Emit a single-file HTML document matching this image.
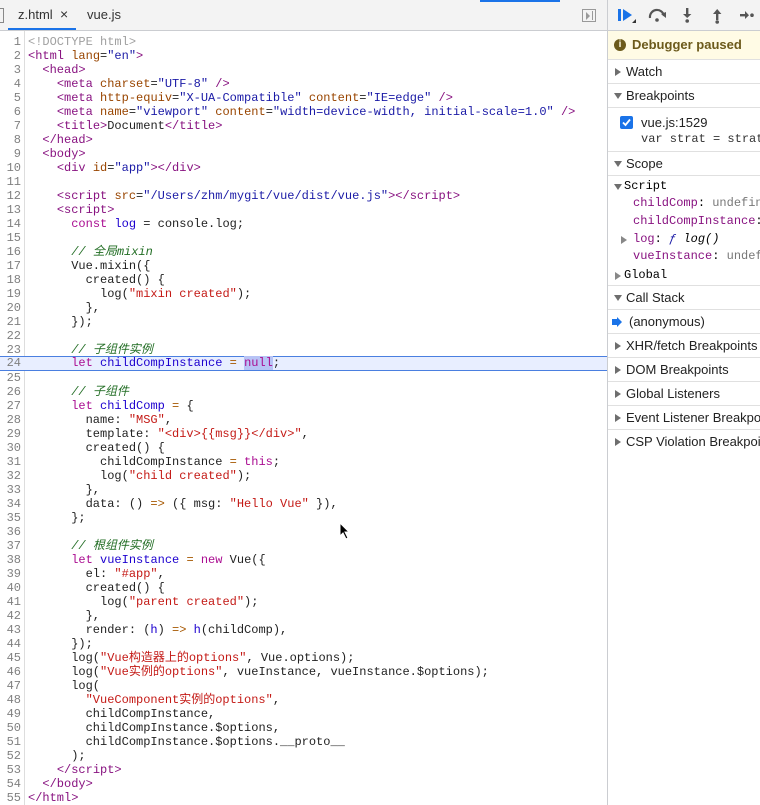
<!DOCTYPE html>
<html><head><meta charset="utf-8">
<style>
*{margin:0;padding:0;box-sizing:border-box}
body{width:760px;height:805px;overflow:hidden;background:#fff;font-family:"Liberation Sans","Noto Sans CJK SC",sans-serif;position:relative}
#tabs{position:absolute;left:0;top:0;width:607px;height:31px;background:#f3f3f3;border-bottom:1px solid #cbcdd1}
#tabs .t{position:absolute;top:7px;font-size:13px;color:#333}
#code{position:absolute;left:0;top:35px;width:607px}
.l{height:14px;line-height:14px;font-family:"Liberation Mono","Noto Sans CJK SC",monospace;font-size:12px;white-space:pre;position:relative;color:#222}
.l .n{display:inline-block;width:21px;text-align:right;color:#808080;padding-right:0}
.l .c{position:absolute;left:28px;top:0}
#gut{position:absolute;left:24px;top:31px;width:1px;height:774px;background:#ddd}
.hl{background:#e8eeff;border-top:1px solid #4a7fe0;border-bottom:1px solid #4a7fe0;height:15px;margin-top:-1px;line-height:13px}
.tg{color:#881280}.at{color:#994500}.av{color:#1a1aa6}.dt{color:#a0a0a0}
.kw{color:#aa0d91}.df{color:#1c00cf}.s{color:#c41a16}.cm{color:#236e25;font-style:italic}.op{color:#a65700}
#side{position:absolute;left:607px;top:0;width:153px;height:805px;border-left:1px solid #cbcdd1;background:#fff;overflow:hidden}
#tb{height:31px;border-bottom:1px solid #cbcdd1;background:#f3f3f3;position:relative}
#paused{height:29px;background:#fffbe5;border-bottom:1px solid #e0e0e0;font-size:13px;font-weight:bold;color:#6c5a1b;line-height:28px;padding-left:24px;position:relative}
.sec{height:24px;border-bottom:1px solid #e0e0e0;font-size:13px;color:#222;line-height:23px;padding-left:18px;position:relative;white-space:nowrap}
.tri{position:absolute;left:6px;top:9px;width:0;height:0;border-left:4px solid transparent;border-right:4px solid transparent;border-top:6px solid #6e6e6e}
.tr{position:absolute;left:7px;top:8px;width:0;height:0;border-top:4px solid transparent;border-bottom:4px solid transparent;border-left:6px solid #6e6e6e}
.mono{font-family:"Liberation Mono",monospace;font-size:12px;white-space:pre;position:absolute}
</style></head><body>
<div id="tabs">
<div style="position:absolute;left:0;top:8px;width:4px;height:15px;border:1px solid #888;border-left:none"></div>
<span class="t" style="left:18px">z.html</span><span class="t" style="left:60px;font-size:14px;top:6px">×</span>
<span class="t" style="left:87px">vue.js</span>
<div style="position:absolute;left:8px;top:28px;width:68px;height:2px;background:#1a73e8"></div>
<div style="position:absolute;left:582px;top:9px;width:14px;height:13px;border:1px solid #999"><div style="position:absolute;right:2px;top:1px;width:1px;height:9px;background:#999"></div><div style="position:absolute;left:3px;top:2px;border-top:4px solid transparent;border-bottom:4px solid transparent;border-left:4px solid #999"></div></div>
</div>
<div style="position:absolute;left:480px;top:0;width:80px;height:2px;background:#1a73e8"></div>
<div id="gut"></div>
<div id="code">
<div class="l"><span class="n">1</span><span class="c dt">&lt;!DOCTYPE html&gt;</span></div>
<div class="l"><span class="n">2</span><span class="c"><span class="tg">&lt;html</span> <span class="at">lang</span>=<span class="av">"en"</span><span class="tg">&gt;</span></span></div>
<div class="l"><span class="n">3</span><span class="c">  <span class="tg">&lt;head&gt;</span></span></div>
<div class="l"><span class="n">4</span><span class="c">    <span class="tg">&lt;meta</span> <span class="at">charset</span>=<span class="av">"UTF-8"</span> <span class="tg">/&gt;</span></span></div>
<div class="l"><span class="n">5</span><span class="c">    <span class="tg">&lt;meta</span> <span class="at">http-equiv</span>=<span class="av">"X-UA-Compatible"</span> <span class="at">content</span>=<span class="av">"IE=edge"</span> <span class="tg">/&gt;</span></span></div>
<div class="l"><span class="n">6</span><span class="c">    <span class="tg">&lt;meta</span> <span class="at">name</span>=<span class="av">"viewport"</span> <span class="at">content</span>=<span class="av">"width=device-width, initial-scale=1.0"</span> <span class="tg">/&gt;</span></span></div>
<div class="l"><span class="n">7</span><span class="c">    <span class="tg">&lt;title&gt;</span>Document<span class="tg">&lt;/title&gt;</span></span></div>
<div class="l"><span class="n">8</span><span class="c">  <span class="tg">&lt;/head&gt;</span></span></div>
<div class="l"><span class="n">9</span><span class="c">  <span class="tg">&lt;body&gt;</span></span></div>
<div class="l"><span class="n">10</span><span class="c">    <span class="tg">&lt;div</span> <span class="at">id</span>=<span class="av">"app"</span><span class="tg">&gt;&lt;/div&gt;</span></span></div>
<div class="l"><span class="n">11</span></div>
<div class="l"><span class="n">12</span><span class="c">    <span class="tg">&lt;script</span> <span class="at">src</span>=<span class="av">"/Users/zhm/mygit/vue/dist/vue.js"</span><span class="tg">&gt;&lt;/script&gt;</span></span></div>
<div class="l"><span class="n">13</span><span class="c">    <span class="tg">&lt;script&gt;</span></span></div>
<div class="l"><span class="n">14</span><span class="c">      <span class="kw">const</span> <span class="df">log</span> = console.log;</span></div>
<div class="l"><span class="n">15</span></div>
<div class="l"><span class="n">16</span><span class="c">      <span class="cm">// 全局mixin</span></span></div>
<div class="l"><span class="n">17</span><span class="c">      Vue.mixin({</span></div>
<div class="l"><span class="n">18</span><span class="c">        created() {</span></div>
<div class="l"><span class="n">19</span><span class="c">          log(<span class="s">"mixin created"</span>);</span></div>
<div class="l"><span class="n">20</span><span class="c">        },</span></div>
<div class="l"><span class="n">21</span><span class="c">      });</span></div>
<div class="l"><span class="n">22</span></div>
<div class="l"><span class="n">23</span><span class="c">      <span class="cm">// 子组件实例</span></span></div>
<div class="l hl"><span class="n">24</span><span class="c">      <span class="kw">let</span> <span class="df">childCompInstance</span> <span class="op">=</span> <span class="kw" style="background:#b7c3f5">null</span>;</span></div>
<div class="l"><span class="n">25</span></div>
<div class="l"><span class="n">26</span><span class="c">      <span class="cm">// 子组件</span></span></div>
<div class="l"><span class="n">27</span><span class="c">      <span class="kw">let</span> <span class="df">childComp</span> <span class="op">=</span> {</span></div>
<div class="l"><span class="n">28</span><span class="c">        name: <span class="s">"MSG"</span>,</span></div>
<div class="l"><span class="n">29</span><span class="c">        template: <span class="s">"&lt;div&gt;{{msg}}&lt;/div&gt;"</span>,</span></div>
<div class="l"><span class="n">30</span><span class="c">        created() {</span></div>
<div class="l"><span class="n">31</span><span class="c">          childCompInstance <span class="op">=</span> <span class="kw">this</span>;</span></div>
<div class="l"><span class="n">32</span><span class="c">          log(<span class="s">"child created"</span>);</span></div>
<div class="l"><span class="n">33</span><span class="c">        },</span></div>
<div class="l"><span class="n">34</span><span class="c">        data: () <span class="op">=&gt;</span> ({ msg: <span class="s">"Hello Vue"</span> }),</span></div>
<div class="l"><span class="n">35</span><span class="c">      };</span></div>
<div class="l"><span class="n">36</span></div>
<div class="l"><span class="n">37</span><span class="c">      <span class="cm">// 根组件实例</span></span></div>
<div class="l"><span class="n">38</span><span class="c">      <span class="kw">let</span> <span class="df">vueInstance</span> <span class="op">=</span> <span class="kw">new</span> Vue({</span></div>
<div class="l"><span class="n">39</span><span class="c">        el: <span class="s">"#app"</span>,</span></div>
<div class="l"><span class="n">40</span><span class="c">        created() {</span></div>
<div class="l"><span class="n">41</span><span class="c">          log(<span class="s">"parent created"</span>);</span></div>
<div class="l"><span class="n">42</span><span class="c">        },</span></div>
<div class="l"><span class="n">43</span><span class="c">        render: (<span class="df">h</span>) <span class="op">=&gt;</span> <span class="df">h</span>(childComp),</span></div>
<div class="l"><span class="n">44</span><span class="c">      });</span></div>
<div class="l"><span class="n">45</span><span class="c">      log(<span class="s">"Vue构造器上的options"</span>, Vue.options);</span></div>
<div class="l"><span class="n">46</span><span class="c">      log(<span class="s">"Vue实例的options"</span>, vueInstance, vueInstance.$options);</span></div>
<div class="l"><span class="n">47</span><span class="c">      log(</span></div>
<div class="l"><span class="n">48</span><span class="c">        <span class="s">"VueComponent实例的options"</span>,</span></div>
<div class="l"><span class="n">49</span><span class="c">        childCompInstance,</span></div>
<div class="l"><span class="n">50</span><span class="c">        childCompInstance.$options,</span></div>
<div class="l"><span class="n">51</span><span class="c">        childCompInstance.$options.__proto__</span></div>
<div class="l"><span class="n">52</span><span class="c">      );</span></div>
<div class="l"><span class="n">53</span><span class="c">    <span class="tg">&lt;/script&gt;</span></span></div>
<div class="l"><span class="n">54</span><span class="c">  <span class="tg">&lt;/body&gt;</span></span></div>
<div class="l"><span class="n">55</span><span class="c"><span class="tg">&lt;/html&gt;</span></span></div>
</div>
<svg style="position:absolute;left:339px;top:522px" width="12" height="18" viewBox="0 0 12 18"><path d="M1 1 L1 14 L4 11 L7 17 L9 16 L6 10 L10 10 Z" fill="#000" stroke="#fff" stroke-width="1"/></svg>
<div id="side">
<div id="tb">
<svg style="position:absolute;left:8px;top:7px" width="140" height="18" viewBox="0 0 140 18">
<rect x="2" y="2" width="3" height="12" fill="#1a73e8"/><path d="M7 2 L16 8 L7 14 Z" fill="#1a73e8"/><path d="M16 16 L20 16 L20 12 Z" fill="#333"/>
<path d="M34 11 A7 7 0 0 1 48 9" fill="none" stroke="#555" stroke-width="2.2"/><path d="M45 7 L50 11 L50 5 Z" fill="#555"/><circle cx="41" cy="13" r="1.8" fill="#555"/>
<rect x="70" y="1" width="2.4" height="7" fill="#555"/><path d="M67 7 L71.2 11 L75.4 7 Z" fill="#555"/><circle cx="71.2" cy="14" r="1.8" fill="#555"/>
<rect x="100" y="6" width="2.4" height="7" fill="#555"/><path d="M97 7 L101.2 2 L105.4 7 Z" fill="#555"/><circle cx="101.2" cy="15" r="1.8" fill="#555"/>
<rect x="124" y="7" width="6" height="2.4" fill="#555"/><path d="M129 4 L133 8.2 L129 12 Z" fill="#555"/><circle cx="136" cy="8.2" r="1.8" fill="#555"/>
</svg>
</div>
<div id="paused"><span style="position:absolute;left:6px;top:8px;width:12px;height:12px;border-radius:50%;background:#6c5a1b;color:#fffbe5;font-size:10px;line-height:12px;text-align:center">i</span>Debugger paused</div>
<div class="sec"><span class="tr"></span>Watch</div>
<div class="sec"><span class="tri"></span>Breakpoints</div>
<div style="height:44px;border-bottom:1px solid #e0e0e0;position:relative">
<div style="position:absolute;left:12px;top:8px;width:13px;height:13px;background:#1a73e8;border-radius:2px"><svg width="13" height="13"><path d="M3 6.5 L5.5 9 L10 3.5" fill="none" stroke="#fff" stroke-width="1.8"/></svg></div>
<span style="position:absolute;left:33px;top:7px;font-size:13px;color:#222">vue.js:1529</span>
<span class="mono" style="left:33px;top:24px;color:#333">var strat = strat</span>
</div>
<div class="sec"><span class="tri"></span>Scope</div>
<div style="height:110px;border-bottom:1px solid #e0e0e0;position:relative">
<span class="tri" style="top:8px"></span><span class="mono" style="left:16px;top:3px">Script</span>
<span class="mono" style="left:25px;top:20px"><span style="color:#881280">childComp</span>: <span style="color:#777">undefined</span></span>
<span class="mono" style="left:25px;top:38px"><span style="color:#881280">childCompInstance</span>: null</span>
<span class="tr" style="left:13px;top:60px;border-left-color:#888"></span>
<span class="mono" style="left:25px;top:56px"><span style="color:#881280">log</span>: <i style="color:#1a1aa6">ƒ</i> <i>log()</i></span>
<span class="mono" style="left:25px;top:73px"><span style="color:#881280">vueInstance</span>: <span style="color:#777">undefined</span></span>
<span class="tr" style="top:96px;border-left-color:#888"></span><span class="mono" style="left:16px;top:92px">Global</span>
</div>
<div class="sec"><span class="tri"></span>Call Stack</div>
<div class="sec" style="padding-left:21px"><svg style="position:absolute;left:4px;top:7px" width="10" height="10"><path d="M0 2 L5 2 L5 0 L10 5 L5 10 L5 8 L0 8 Z" fill="#1a73e8"/></svg>(anonymous)</div>
<div class="sec"><span class="tr"></span>XHR/fetch Breakpoints</div>
<div class="sec"><span class="tr"></span>DOM Breakpoints</div>
<div class="sec"><span class="tr"></span>Global Listeners</div>
<div class="sec"><span class="tr"></span>Event Listener Breakpoints</div>
<div class="sec" style="border-bottom:none"><span class="tr"></span>CSP Violation Breakpoints</div>
</div>
</body></html>
